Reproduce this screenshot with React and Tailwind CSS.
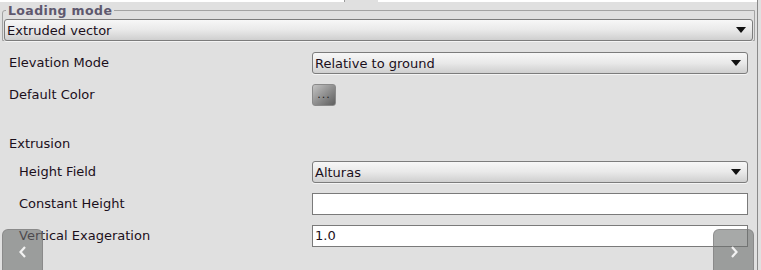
import { useState } from 'react';

const font = "font-['DejaVu_Sans',sans-serif]";

function Arrow() {
  return (
    <svg width="10" height="6" viewBox="0 0 10 6" className="shrink-0">
      <path d="M0 0h10L5 6z" fill="#111" />
    </svg>
  );
}

function Combo({ value, className = '' }) {
  return (
    <div
      className={`flex items-center justify-between h-[22px] pl-[2px] pr-[6px] rounded-[3px] border border-[#7c7c7c] bg-gradient-to-b from-[#f7f7f7] via-[#e9e9e9] to-[#cfcfcf] shadow-[0_1px_0_#f4f4f4] text-[13px] text-[#1b0f1b] ${className}`}
    >
      <span className="leading-none">{value}</span>
      <Arrow />
    </div>
  );
}

function TextInput({ value }) {
  return (
    <div className="flex items-center h-[22px] pl-[2px] border border-[#7a7a7a] bg-white text-[13px] text-[#1b0f1b]">
      {value}
    </div>
  );
}

function Row({ label, indent, children }) {
  return (
    <div className="grid grid-cols-[303px_1fr] items-center h-[22px]">
      <div className={`text-[13px] text-[#1b0f1b] ${indent ? 'pl-[10px]' : ''}`}>{label}</div>
      {children}
    </div>
  );
}

function NavButton({ dir, className }) {
  return (
    <div
      className={`absolute w-[41px] h-[46px] rounded-[6px] border border-[#7f7f7f]/60 bg-[#6d6f6e]/60 flex items-center justify-center ${className}`}
    >
      <svg width="10" height="14" viewBox="0 0 10 14">
        <path
          d={dir === 'left' ? 'M7 2L2.5 7L7 12' : 'M3 2L7.5 7L3 12'}
          fill="none"
          stroke="#f2f2f2"
          strokeWidth="2.2"
        />
      </svg>
    </div>
  );
}

export default function App() {
  const [mode] = useState('Extruded vector');

  return (
    <div className={`relative w-[761px] h-[270px] overflow-hidden bg-[#e0e0e0] ${font}`}>
      {/* tab strip edge */}
      <div className="flex h-[2px]">
        <div className="w-[345px] bg-white border-r border-[#9a9a9a]" />
        <div className="w-[33px]" />
        <div className="w-[379px] bg-white" />
      </div>
      <div className="absolute right-[3px] top-0 bottom-0 w-px bg-[#8a8a8a]" />

      <div className="pl-[2px] pr-[6px]">
        {/* Loading mode group */}
        <fieldset className="border border-[#a3a3a3] rounded-tl-[3px] px-[1px] pb-[2px] pt-0 mt-[1px] h-[38px]">
          <legend className="ml-[2px] px-[2px] text-[12.5px] font-bold leading-[15px] tracking-[0.4px] text-[#5e586e]">
            Loading mode
          </legend>
          <div className="mt-[1px]">
            <Combo value={mode} className="h-[18px] rounded-[2px] pr-[4px]" />
          </div>
        </fieldset>
      </div>

      <div className="pl-[9px] pr-[13px] pt-[11px] flex flex-col">
        <Row label="Elevation Mode">
          <Combo value="Relative to ground" />
        </Row>
        <div className="mt-[10px]">
          <Row label="Default Color">
            <div className="w-[24px] h-[22px] rounded-[3px] border border-[#8a8a8a] bg-gradient-to-br from-[#c4c4c4] to-[#5f5f5f] flex items-end justify-center pb-[5px]">
              <span className="text-[11px] leading-none text-[#222] tracking-[1px]">...</span>
            </div>
          </Row>
        </div>
        <div className="mt-[28px] h-[20px] flex items-center text-[13px] text-[#1b0f1b]">Extrusion</div>
        <div className="mt-[7px]">
          <Row label="Height Field" indent>
            <Combo value="Alturas" />
          </Row>
        </div>
        <div className="mt-[10px]">
          <Row label="Constant Height" indent>
            <TextInput value="" />
          </Row>
        </div>
        <div className="mt-[10px]">
          <Row label="Vertical Exageration" indent>
            <TextInput value="1.0" />
          </Row>
        </div>
      </div>

      <NavButton dir="left" className="left-[2px] top-[229px]" />
      <NavButton dir="right" className="left-[713px] top-[229px]" />
    </div>
  );
}
